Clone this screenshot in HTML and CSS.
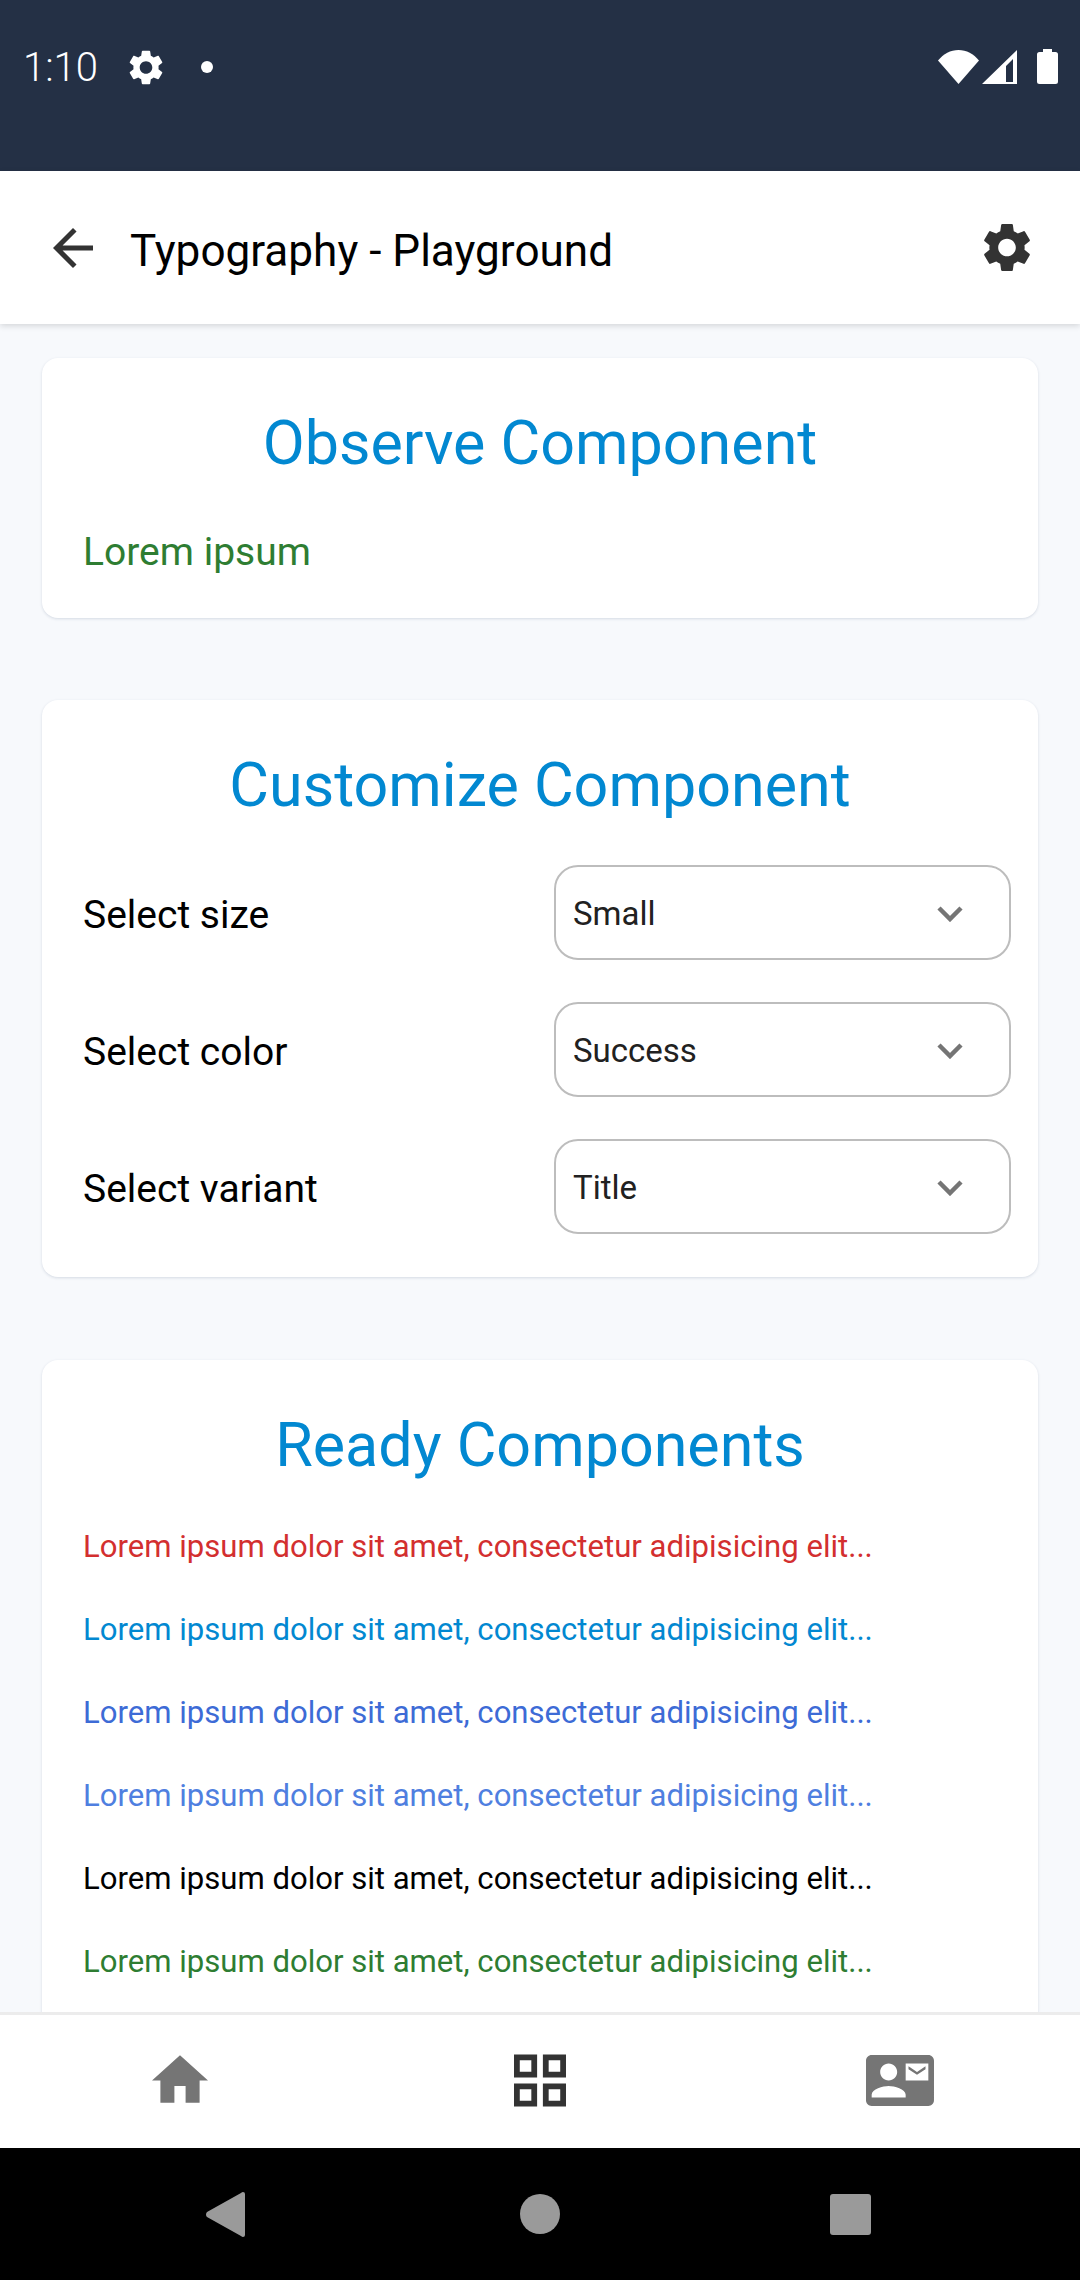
FILE: index.html
```html
<!DOCTYPE html>
<html lang="en">

<head>
    <meta charset="UTF-8">
    <meta name="viewport" content="width=device-width, initial-scale=1.0">
    <title>Typography - Playground</title>
    <link rel="stylesheet" href="styles.css">
</head>

<body>
    <div class="status-bar">
        <span class="status-time">1:10</span>
        <svg class="status-gear" viewBox="3 2 18 20"><path d="M19.14 12.94c.04-.3.06-.61.06-.94 0-.32-.02-.64-.07-.94l2.03-1.58c.18-.14.23-.41.12-.61l-1.92-3.32c-.12-.22-.37-.29-.59-.22l-2.39.96c-.5-.38-1.03-.7-1.62-.94l-.36-2.54c-.04-.24-.24-.41-.48-.41h-3.84c-.24 0-.43.17-.47.41l-.36 2.54c-.59.24-1.13.57-1.62.94l-2.39-.96c-.22-.08-.47 0-.59.22L2.74 8.87c-.12.21-.08.47.12.61l2.03 1.58c-.05.3-.09.63-.09.94s.02.64.07.94l-2.03 1.58c-.18.14-.23.41-.12.61l1.92 3.32c.12.22.37.29.59.22l2.39-.96c.5.38 1.03.7 1.62.94l.36 2.54c.05.24.24.41.48.41h3.84c.24 0 .44-.17.47-.41l.36-2.54c.59-.24 1.13-.56 1.62-.94l2.39.96c.22.08.47 0 .59-.22l1.92-3.32c.12-.22.07-.47-.12-.61l-2.01-1.58zM12 15.6c-1.98 0-3.6-1.62-3.6-3.6s1.62-3.6 3.6-3.6 3.6 1.62 3.6 3.6-1.62 3.6-3.6 3.6z" /></svg>
        <span class="status-dot"></span>
        <div class="status-right">
            <svg class="status-wifi" viewBox="0 0 41 34"><path d="M0 10.500C5.500 4 12.500 0 20.500 0S35.500 4 41 10.500L20.500 34z" /></svg>
            <svg class="status-signal" viewBox="0 0 35 34"><path fill-rule="evenodd" d="M35 0v34H0zM31 9l-7 7V32h7z" /></svg>
            <svg class="status-battery" viewBox="0 0 21 35"><path d="M6 0h9v3h3.500Q21 3 21 5.500V32.500Q21 35 18.500 35H2.500Q0 35 0 32.500V5.500Q0 3 2.500 3H6z" /></svg>
        </div>
    </div>

    <header class="app-bar">
        <svg class="back-icon" viewBox="4 4 16 16"><path d="M20 11H7.830l5.590-5.590L12 4l-8 8 8 8 1.410-1.410L7.830 13H20v-2z" /></svg>
        <h1 class="app-title">Typography - Playground</h1>
        <svg class="settings-icon" viewBox="2.500 2 19 20"><path d="M19.140 12.940c.04-.3.06-.61.06-.94 0-.32-.02-.64-.07-.94l2.030-1.580c.18-.14.23-.41.12-.61l-1.920-3.320c-.12-.22-.37-.29-.59-.22l-2.390.96c-.5-.38-1.030-.7-1.620-.94l-.36-2.540c-.04-.24-.24-.41-.48-.41h-3.840c-.24 0-.43.17-.47.41l-.36 2.540c-.59.24-1.130.57-1.620.94l-2.390-.96c-.22-.08-.47 0-.59.22L2.740 8.870c-.12.21-.08.47.12.61l2.030 1.580c-.05.3-.09.63-.09.94s.02.64.07.94l-2.030 1.580c-.18.14-.23.41-.12.61l1.920 3.320c.12.22.37.29.59.22l2.390-.96c.5.38 1.030.7 1.620.94l.36 2.54c.05.24.24.41.48.41h3.840c.24 0 .44-.17.47-.41l.36-2.540c.59-.24 1.130-.56 1.620-.94l2.390.96c.22.08.47 0 .59-.22l1.920-3.320c.12-.22.07-.47-.12-.61l-2.010-1.580zM12 15.600c-1.980 0-3.600-1.620-3.600-3.600s1.620-3.600 3.600-3.600 3.600 1.620 3.600 3.600-1.620 3.600-3.600 3.600z" /></svg>
    </header>

    <main class="content">
        <section class="card observe-card">
            <h2 class="card-title">Observe Component</h2>
            <p class="observe-text">Lorem ipsum</p>
        </section>

        <section class="card customize-card">
            <h2 class="card-title">Customize Component</h2>
            <div class="select-row">
                <span class="select-label">Select size</span>
                <div class="select-box">
                    <span>Small</span>
                    <svg class="chevron" viewBox="0 0 26 16"><path d="M2 2l11 11L24 2" /></svg>
                </div>
            </div>
            <div class="select-row">
                <span class="select-label">Select color</span>
                <div class="select-box">
                    <span>Success</span>
                    <svg class="chevron" viewBox="0 0 26 16"><path d="M2 2l11 11L24 2" /></svg>
                </div>
            </div>
            <div class="select-row">
                <span class="select-label">Select variant</span>
                <div class="select-box">
                    <span>Title</span>
                    <svg class="chevron" viewBox="0 0 26 16"><path d="M2 2l11 11L24 2" /></svg>
                </div>
            </div>
        </section>

        <section class="card ready-card">
            <h2 class="card-title">Ready Components</h2>
            <p class="ready-line text-danger">Lorem ipsum dolor sit amet, consectetur adipisicing elit...</p>
            <p class="ready-line text-info">Lorem ipsum dolor sit amet, consectetur adipisicing elit...</p>
            <p class="ready-line text-primary">Lorem ipsum dolor sit amet, consectetur adipisicing elit...</p>
            <p class="ready-line text-secondary">Lorem ipsum dolor sit amet, consectetur adipisicing elit...</p>
            <p class="ready-line text-dark">Lorem ipsum dolor sit amet, consectetur adipisicing elit...</p>
            <p class="ready-line text-success">Lorem ipsum dolor sit amet, consectetur adipisicing elit...</p>
        </section>
    </main>

    <nav class="tab-bar">
        <div class="tab">
            <svg class="tab-home" viewBox="2 3 20 17"><path d="M10 20v-6h4v6h5v-8h3L12 3 2 12h3v8z" /></svg>
        </div>
        <div class="tab">
            <svg class="tab-grid" viewBox="3 3 18 18"><path d="M3 3v8h8V3H3zm6 6H5V5h4v4zm-6 4v8h8v-8H3zm6 6H5v-4h4v4zm4-16v8h8V3h-8zm6 6h-4V5h4v4zm-6 4v8h8v-8h-8zm6 6h-4v-4h4v4z" /></svg>
        </div>
        <div class="tab">
            <svg class="tab-contact" viewBox="0 3 24 18"><path d="M21 8V7l-3 2-3-2v1l3 2 3-2zm1-5H2C.9 3 0 3.900 0 5v14c0 1.100.9 2 2 2h20c1.100 0 1.990-.9 1.990-2L24 5c0-1.100-.9-2-2-2zM8 6c1.660 0 3 1.340 3 3s-1.340 3-3 3-3-1.340-3-3 1.340-3 3-3zm6 12H2v-1c0-2 4-3.100 6-3.100s6 1.100 6 3.100v1zm8-6h-8V6h8v6z" /></svg>
        </div>
    </nav>

    <div class="nav-bar">
        <svg class="nav-back" viewBox="0 0 39 45"><path d="M37 0Q39 0 39 2V43Q39 45 37 45 36 45 35 44L1 25Q0 24 0 22.500 0 21 1 20L35 1Q36 0 37 0z" /></svg>
        <span class="nav-home"></span>
        <span class="nav-recent"></span>
    </div>
</body>

</html>
```

FILE: styles.css
```css
* {
    box-sizing: border-box;
}

body {
    font-family: Roboto, Arial, sans-serif;
    margin: 0;
    padding: 0;
    width: 1080px;
    height: 2280px;
    display: flex;
    flex-direction: column;
    overflow: hidden;
    background-color: #f7f9fc;
}

svg {
    display: block;
    flex-shrink: 0;
}

.status-bar {
    height: 171px;
    flex-shrink: 0;
    background-color: #243045;
    color: #fff;
    display: flex;
    align-items: flex-start;
    padding: 49px 22px 0 23px;
    fill: #fff;
}

.status-time {
    font-size: 40px;
    line-height: 38px;
    font-weight: 300;
    width: 106px;
}

.status-gear {
    width: 34px;
    height: 35px;
    margin-top: 1px;
}

.status-dot {
    width: 12px;
    height: 12px;
    margin: 12px 0 0 38px;
    border-radius: 50%;
    background-color: #fff;
}

.status-right {
    margin-left: auto;
    display: flex;
    align-items: flex-start;
}

.status-wifi {
    width: 41px;
    height: 34px;
    margin-top: 1px;
}

.status-signal {
    width: 35px;
    height: 34px;
    margin: 1px 20px 0 3px;
}

.status-battery {
    width: 21px;
    height: 35px;
}

.app-bar {
    height: 153px;
    flex-shrink: 0;
    background-color: #fff;
    display: flex;
    align-items: center;
    padding: 0 49px 0 53px;
    box-shadow: 0 2px 6px rgba(0, 0, 0, 0.14);
    position: relative;
    z-index: 1;
}

.back-icon {
    width: 40px;
    height: 40px;
    fill: #333;
}

.app-title {
    flex: 1;
    margin: 6px 0 0 37px;
    font-size: 44.100px;
    font-weight: 400;
    color: #000;
}

.settings-icon {
    width: 48px;
    height: 49px;
    fill: #333;
}

.content {
    flex: 1;
    min-height: 0;
    overflow: hidden;
    padding: 34px 42px 0;
}

.card {
    background-color: #fff;
    border-radius: 16px;
    box-shadow: 0 1px 3px rgba(40, 60, 100, 0.16);
    padding: 0 27px 0 41px;
}

.card-title {
    margin: 0;
    padding-right: 14px;
    text-align: center;
    font-size: 61px;
    font-weight: 400;
    color: #0288d1;
}

.observe-card {
    height: 260px;
    padding-top: 49px;
    margin-bottom: 82px;
}

.observe-text {
    margin: 50px 0 0;
    font-size: 39px;
    color: #2e7d32;
}

.customize-card {
    height: 577px;
    padding-top: 49px;
    margin-bottom: 83px;
}

.customize-card .card-title {
    margin-bottom: 44px;
}

.select-row {
    display: flex;
    align-items: center;
    justify-content: space-between;
    margin-bottom: 42px;
}

.select-label {
    font-size: 39px;
    margin-top: 5px;
    color: #000;
}

.select-box {
    width: 457px;
    height: 95px;
    border: 2px solid #bdbdbd;
    border-radius: 24px;
    padding: 2px 46px 0 17px;
    display: flex;
    align-items: center;
    justify-content: space-between;
    font-size: 33px;
    color: #212121;
}

.chevron {
    width: 26px;
    height: 16px;
    fill: none;
    stroke: #757575;
    stroke-width: 4.500px;
}

.ready-card {
    padding-top: 49px;
    padding-bottom: 40px;
}

.ready-card .card-title {
    margin-bottom: 47px;
}

.ready-line {
    margin: 0 0 46px;
    font-size: 31.100px;
    line-height: 37px;
    white-space: nowrap;
}

.text-danger {
    color: #d32f2f;
}

.text-info {
    color: #0288d1;
}

.text-primary {
    color: #3d6bd6;
}

.text-secondary {
    color: #4f7fe0;
}

.text-dark {
    color: #000;
}

.text-success {
    color: #2e7d32;
}

.tab-bar {
    height: 136px;
    flex-shrink: 0;
    background-color: #fff;
    border-top: 3px solid #ececec;
    display: flex;
    position: relative;
    z-index: 1;
}

.tab {
    flex: 1;
    display: flex;
    align-items: flex-start;
    justify-content: center;
    padding-top: 39px;
}

.tab-home {
    width: 56px;
    height: 48px;
    margin-top: 1px;
    fill: #757575;
}

.tab-grid {
    width: 52px;
    height: 53px;
    fill: #333;
}

.tab-contact {
    width: 68px;
    height: 53px;
    fill: #757575;
}

.nav-bar {
    height: 132px;
    flex-shrink: 0;
    background-color: #000;
    display: flex;
    align-items: center;
}

.nav-back {
    width: 39px;
    height: 45px;
    margin-left: 206px;
    fill: #9a9a9a;
}

.nav-home {
    width: 40px;
    height: 40px;
    margin-left: 275px;
    border-radius: 50%;
    background-color: #9a9a9a;
}

.nav-recent {
    width: 41px;
    height: 41px;
    margin-left: 270px;
    border-radius: 3px;
    background-color: #9a9a9a;
}
```
